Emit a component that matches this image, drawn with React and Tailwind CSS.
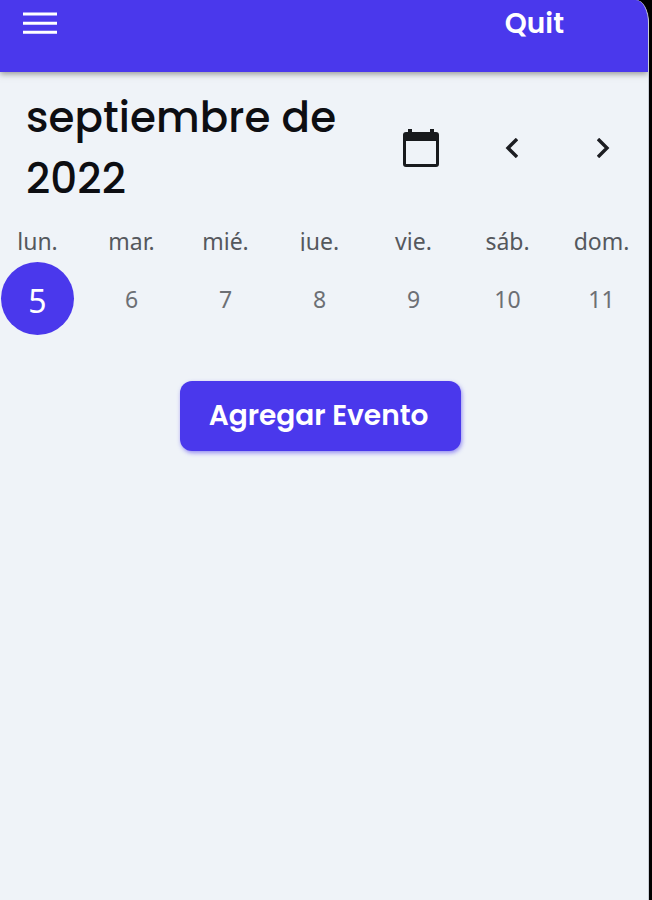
const days = [
  ['lun.', 5], ['mar.', 6], ['mié.', 7], ['jue.', 8], ['vie.', 9], ['sáb.', 10], ['dom.', 11],
];

function Chevron({ d }) {
  return (
    <svg viewBox="0 0 14 20" className="h-5 w-3.5" fill="none" stroke="#1c1d22" strokeWidth="3.4">
      <path d={d} />
    </svg>
  );
}

export default function App() {
  return (
    <div className="h-[900px] w-[652px] overflow-hidden bg-black">
      <div className="flex h-full w-[649px] flex-col overflow-hidden rounded-tr-[13px_23px] border-r border-[#c9ced6] bg-[#eff3f8] font-['Poppins','Inter',sans-serif]">
        <header className="flex h-[72px] shrink-0 justify-between bg-[#4a38ec] pl-[23px] pr-[84px] shadow-[0_2px_6px_rgba(60,60,50,0.5)]">
          <svg viewBox="0 0 34 24" className="mt-3 h-6 w-[34px]" fill="#fff">
            <path d="M0 .5h34v3H0zM0 9.8h34v3H0zM0 18.8h34v3H0z" />
          </svg>
          <span className="mt-1 h-10 text-[28px] leading-10 font-semibold text-white">Quit</span>
        </header>

        <section className="flex h-[156px] shrink-0 items-center pl-[26px]">
          <h1 className="mt-[-5px] w-[376px] text-[42px] leading-[61px] font-medium tracking-[0.1px] text-[#0d0e12]">
            septiembre de<br />2022
          </h1>
          <svg viewBox="0 0 38 40" className="-mt-1 h-10 w-[38px]" fill="#181a1d">
            <path d="M6 1h4v3h18V1h4v3h2q3 0 3 3v29q0 3-3 3H4q-3 0-3-3V7q0-3 3-3h2zM4 13v23h30V13z" fillRule="evenodd" />
          </svg>
          <div className="-mt-1 ml-[64px] flex w-[107px] justify-between">
            <Chevron d="M13 1 4 10l9 9" />
            <Chevron d="m1 1 9 9-9 9" />
          </div>
        </section>

        <section className="-ml-[9.5px] grid w-[658px] shrink-0 grid-cols-7 font-['Noto_Sans',sans-serif] text-[#6c6f74]">
          {days.map(([name, number]) => (
            <div key={name} className="flex flex-col items-center">
              <span className={`h-[23px] text-[23px] leading-[27px] text-[#55585d] ${name === 'jue.' ? 'overflow-hidden' : ''}`}>
                {name}
              </span>
              <span
                className={number === 5
                  ? 'mt-[11px] h-[73px] w-[73px] rounded-full bg-[#4a38ec] text-center text-[32px] leading-[78px] text-white'
                  : 'mt-[11px] h-[73px] text-[23px] leading-[74px]'}
              >
                {number}
              </span>
            </div>
          ))}
        </section>

        <button className="mt-[46px] ml-[180px] h-[70px] w-[281px] shrink-0 rounded-xl bg-[#4a38ec] pr-1 text-[28px] font-semibold text-white shadow-[1px_2px_4px_rgba(74,56,236,0.55)]">
          Agregar Evento
        </button>
      </div>
    </div>
  );
}
